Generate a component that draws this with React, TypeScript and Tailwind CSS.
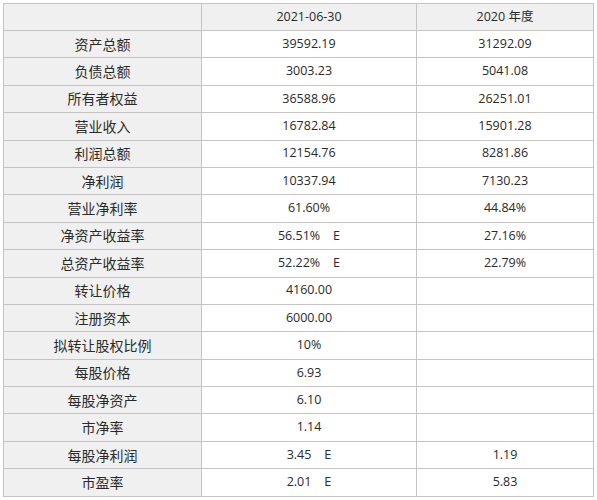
const rows: [string, string, string][] = [
  ['资产总额', '39592.19', '31292.09'],
  ['负债总额', '3003.23', '5041.08'],
  ['所有者权益', '36588.96', '26251.01'],
  ['营业收入', '16782.84', '15901.28'],
  ['利润总额', '12154.76', '8281.86'],
  ['净利润', '10337.94', '7130.23'],
  ['营业净利率', '61.60%', '44.84%'],
  ['净资产收益率', '56.51%\u00a0\u00a0\u00a0\u00a0E', '27.16%'],
  ['总资产收益率', '52.22%\u00a0\u00a0\u00a0\u00a0E', '22.79%'],
  ['转让价格', '4160.00', ''],
  ['注册资本', '6000.00', ''],
  ['拟转让股权比例', '10%', ''],
  ['每股价格', '6.93', ''],
  ['每股净资产', '6.10', ''],
  ['市净率', '1.14', ''],
  ['每股净利润', '3.45\u00a0\u00a0\u00a0\u00a0E', '1.19'],
  ['市盈率', '2.01\u00a0\u00a0\u00a0\u00a0E', '5.83'],
];

export default function App() {
  return (
    <div
      className="w-[597px] h-[500px] bg-white pl-[3px] pt-[3px] text-[#2a2a2a]"
      style={{ fontFamily: '"Open Sans", "Noto Sans CJK SC", sans-serif' }}
    >
      <table className="border-collapse table-fixed w-[590px] text-[12.5px]">
        <colgroup>
          <col className="w-[198px]" />
          <col className="w-[215px]" />
          <col className="w-[177px]" />
        </colgroup>
        <thead>
          <tr className="h-[27px] bg-[#f0f0f0]">
            <th className="border border-[#c4c4c4] font-normal"></th>
            <th className="border border-[#c4c4c4] font-normal">2021-06-30</th>
            <th className="border border-[#c4c4c4] font-normal">2020 年度</th>
          </tr>
        </thead>
        <tbody>
          {rows.map(([label, a, b]) => (
            <tr key={label} className="h-[27.4px]">
              <td
                className="border border-[#c4c4c4] bg-[#f0f0f0] text-center text-[14px]"
                style={{ fontFamily: '"Noto Sans CJK SC", sans-serif' }}
              >
                {label}
              </td>
              <td className="border border-[#c4c4c4] text-center">{a}</td>
              <td className="border border-[#c4c4c4] text-center">{b}</td>
            </tr>
          ))}
        </tbody>
      </table>
    </div>
  );
}
